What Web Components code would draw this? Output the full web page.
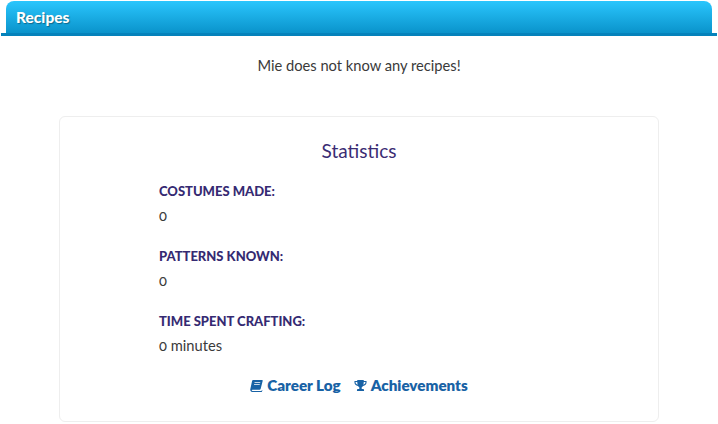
<!DOCTYPE html>
<html>
<head>
<meta charset="utf-8">
<title>Recipes</title>
<style>
  html, body { margin: 0; padding: 0; background: #fff; }
  body { font-family: Lato, "Open Sans", sans-serif; color: #3a3a3a; }
</style>
</head>
<body>
<recipes-page></recipes-page>

<script>
const barTemplate = document.createElement('template')
barTemplate.innerHTML = `
<style>
  :host { display: block; padding: 1px 1px 0; height: 36px; box-sizing: border-box; }
  .line { border-bottom: 3px solid #0582bb; height: 35px; box-sizing: border-box; padding: 0 5px; }
  .tab {
    height: 32px;
    box-sizing: border-box;
    padding: 0 10px;
    border-radius: 8px 8px 0 0;
    background: linear-gradient(#2ac6fd, #0a93cb);
    color: #fff;
    font-weight: 900;
    font-size: 15.5px;
    line-height: 32px;
    text-shadow: 1px 1px 1px rgba(0, 0, 0, .35);
  }
</style>
<div class="line"><div class="tab"><slot></slot></div></div>
`

customElements.define('title-bar',
  class extends HTMLElement {
    constructor() {
      super()
      this.attachShadow({ mode: 'open' }).appendChild(barTemplate.content.cloneNode(true))
    }
  }
)

const statTemplate = document.createElement('template')
statTemplate.innerHTML = `
<style>
  :host { display: block; height: 65px; }
  .label { color: #352a72; font-weight: 900; font-size: 13px; line-height: 20px; padding-top: 5px; }
  .value { color: #3a3a3a; font-size: 14.7px; line-height: 20px; margin-top: 4px; font-variant-numeric: oldstyle-nums; }
</style>
<div class="label" id="label"></div>
<div class="value"><slot></slot></div>
`

customElements.define('stat-row',
  class extends HTMLElement {
    constructor() {
      super()
      this.attachShadow({ mode: 'open' }).appendChild(statTemplate.content.cloneNode(true))
      this.shadowRoot.getElementById('label').textContent = this.getAttribute('label')
    }
  }
)

const cardTemplate = document.createElement('template')
cardTemplate.innerHTML = `
<style>
  :host {
    display: block;
    width: 600px;
    height: 306px;
    box-sizing: border-box;
    margin: 0 auto;
    border: 1px solid #eee;
    border-radius: 6px;
  }
  h2 {
    margin: 0;
    padding-top: 22px;
    color: #3b2c73;
    font-size: 19px;
    font-weight: 400;
    line-height: 24px;
    text-align: center;
  }
  .stats { padding: 13px 0 0 99px; }
  .links {
    display: flex;
    justify-content: center;
    gap: 13px;
    margin-top: 4px;
    font-size: 15.2px;
    line-height: 20px;
    font-weight: 800;
    color: #1862a5;
  }
  .links span { display: flex; align-items: center; gap: 4px; }
  svg { width: 13px; height: 13px; fill: currentColor; display: block; }
</style>
<h2>Statistics</h2>
<div class="stats"><slot></slot></div>
<div class="links">
  <span>
    <svg viewBox="0 0 14 14"><path d="M3.4 1H13c.5 0 .8.4.7.9l-2.2 8.7c-.2.7-.6 1-1.2 1H2.6c-.5 0-.8.3-.7.7.1.3.4.5.8.5h9.6l.6-.9.5.3-.6 1.4c-.1.3-.3.4-.6.4H2.4C1 13.500 0 12.500.3 11L2.300 2c.1-.6.500-1 1.100-1zM5 3.500l-.2.8h6.100l.2-.8zM4.500 5.500l-.2.8h6.100l.2-.8z"/></svg>
    Career Log
  </span>
  <span>
    <svg viewBox="0 0 14 14"><path d="M3.500 1h7v1.200H13.500v1.700c0 1.900-1.500 3.400-3.800 3.700-.4.600-.9 1.100-1.400 1.400v1.700h1.200c.8 0 1.300.5 1.300 1.200V13H3.200v-1.100c0-.7.500-1.200 1.300-1.200h1.200V9c-.5-.3-1-.800-1.400-1.400C2 7.300.5 5.800.500 3.900V2.200h3zM1.700 3.300v.6c0 1 .8 2 2.300 2.400-.3-.8-.5-1.800-.5-3zm10.600 0h-1.800c0 1.200-.2 2.200-.5 3 1.500-.4 2.300-1.400 2.300-2.400z"/></svg>
    Achievements
  </span>
</div>
`

customElements.define('stats-card',
  class extends HTMLElement {
    constructor() {
      super()
      this.attachShadow({ mode: 'open' }).appendChild(cardTemplate.content.cloneNode(true))
    }
  }
)

const pageTemplate = document.createElement('template')
pageTemplate.innerHTML = `
<style>
  :host { display: block; width: 718px; height: 424px; overflow: hidden; }
  p { margin: 0; padding-top: 19px; height: 60px; box-sizing: border-box; text-align: center; font-size: 14.7px; line-height: 20px; color: #3a3a3a; }
  stats-card { margin-top: 20px; }
</style>
<title-bar>Recipes</title-bar>
<p>Mie does not know any recipes!</p>
<stats-card>
  <stat-row label="COSTUMES MADE:">0</stat-row>
  <stat-row label="PATTERNS KNOWN:">0</stat-row>
  <stat-row label="TIME SPENT CRAFTING:">0 minutes</stat-row>
</stats-card>
`

customElements.define('recipes-page',
  class extends HTMLElement {
    constructor() {
      super()
      this.attachShadow({ mode: 'open' }).appendChild(pageTemplate.content.cloneNode(true))
    }
  }
)
</script>
</body>
</html>
